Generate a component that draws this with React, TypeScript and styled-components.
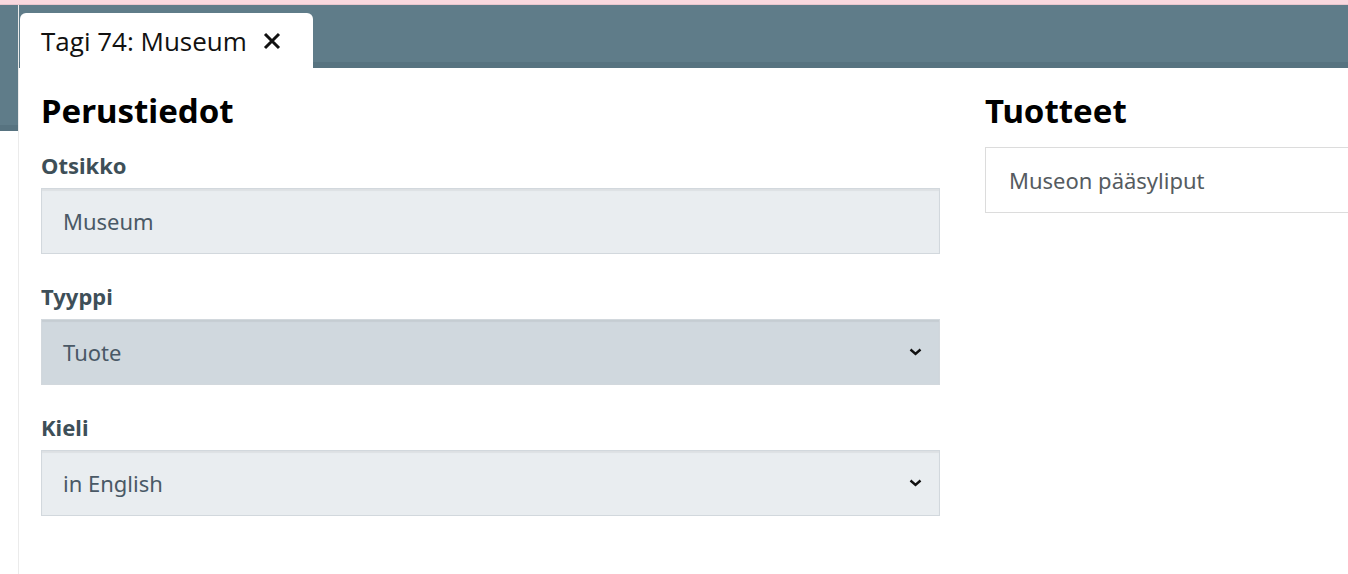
import React from "react";
import styled, { createGlobalStyle } from "styled-components";

const GlobalStyle = createGlobalStyle`
  html, body {
    margin: 0;
    padding: 0;
    background: #fff;
    overflow: hidden;
  }
  body {
    font-family: "Noto Sans", "Open Sans", sans-serif;
  }
`;

const slate = "#5f7c89";
const slateDark = "#577380";

const Page = styled.div`
  width: 1348px;
  height: 574px;
  overflow: hidden;
  display: flex;
  flex-direction: column;
`;

const TopStrip = styled.div`
  height: 4px;
  background: #f8d8de;
  border-bottom: 1px solid #e9c6cd;
  flex-shrink: 0;
`;

const Body = styled.div`
  flex: 1;
  display: flex;
  min-height: 0;
`;

const Gutter = styled.div`
  width: 18px;
  flex-shrink: 0;
  border-right: 1px solid rgba(0, 0, 0, 0.08);
  display: flex;
  flex-direction: column;
`;

const GutterBand = styled.div`
  height: 126px;
  background: ${slate};
  box-shadow: inset 0 -6px 0 ${slateDark};
`;

const Main = styled.div`
  flex: 1;
  min-width: 0;
  display: flex;
  flex-direction: column;
`;

const TabBar = styled.div`
  height: 63px;
  background: ${slate};
  box-shadow: inset 0 -6px 0 ${slateDark};
  display: flex;
  align-items: flex-end;
  padding-left: 1px;
`;

const Tab = styled.div`
  height: 55px;
  width: 293px;
  box-sizing: border-box;
  background: #fff;
  border-radius: 6px 6px 0 0;
  display: flex;
  align-items: center;
  padding-left: 21px;
  gap: 16px;
  font-family: "Open Sans", sans-serif;
  font-size: 26px;
  color: #111;
`;

const CloseIcon = styled.svg`
  width: 18px;
  height: 18px;
  flex-shrink: 0;
`;

const Content = styled.div`
  flex: 1;
  display: flex;
  gap: 45px;
  padding: 23px 0 0 22px;
`;

const Column = styled.div`
  width: 899px;
  flex-shrink: 0;
  display: flex;
  flex-direction: column;
`;

const Heading = styled.h2`
  margin: 0 0 16px;
  font-size: 33px;
  line-height: 40px;
  font-weight: 700;
  color: #000;
`;

const Label = styled.label<{ $first?: boolean }>`
  display: block;
  font-size: 22px;
  line-height: 30px;
  font-weight: 700;
  color: #3e4f58;
  margin: ${(p) => (p.$first ? "3px" : "27px")} 0 8px;
`;

const Field = styled.div<{ $active?: boolean }>`
  height: 66px;
  box-sizing: border-box;
  background: ${(p) => (p.$active ? "#d0d8de" : "#e9edf0")};
  border: 1px solid #d2d8dd;
  box-shadow: inset 0 2px 1px rgba(0, 0, 0, 0.05);
  display: flex;
  align-items: center;
  justify-content: space-between;
  padding: 0 17px 0 21px;
  font-size: 22px;
  color: #4a5966;
`;

const Chevron = styled.svg`
  width: 13px;
  height: 8px;
`;

const ProductBox = styled.div`
  height: 66px;
  box-sizing: border-box;
  border: 1px solid #dcdcdc;
  display: flex;
  align-items: center;
  padding-left: 23px;
  font-size: 22px;
  color: #555b60;
`;

const ChevronDown = () => (
  <Chevron viewBox="0 0 13 8">
    <path d="M1.5 1.5 L6.5 6 L11.5 1.5" fill="none" stroke="#111" strokeWidth="2.4" />
  </Chevron>
);

export default function App() {
  return (
    <>
      <GlobalStyle />
      <Page>
        <TopStrip />
        <Body>
          <Gutter>
            <GutterBand />
          </Gutter>
          <Main>
            <TabBar>
              <Tab>
                Tagi 74: Museum
                <CloseIcon viewBox="0 0 18 18">
                  <path d="M2 2 L16 16 M16 2 L2 16" stroke="#111" strokeWidth="3" />
                </CloseIcon>
              </Tab>
            </TabBar>
            <Content>
              <Column>
                <Heading>Perustiedot</Heading>
                <Label $first>Otsikko</Label>
                <Field>Museum</Field>
                <Label>Tyyppi</Label>
                <Field $active>
                  Tuote
                  <ChevronDown />
                </Field>
                <Label>Kieli</Label>
                <Field>
                  in English
                  <ChevronDown />
                </Field>
              </Column>
              <Column>
                <Heading>Tuotteet</Heading>
                <ProductBox>Museon pääsyliput</ProductBox>
              </Column>
            </Content>
          </Main>
        </Body>
      </Page>
    </>
  );
}
